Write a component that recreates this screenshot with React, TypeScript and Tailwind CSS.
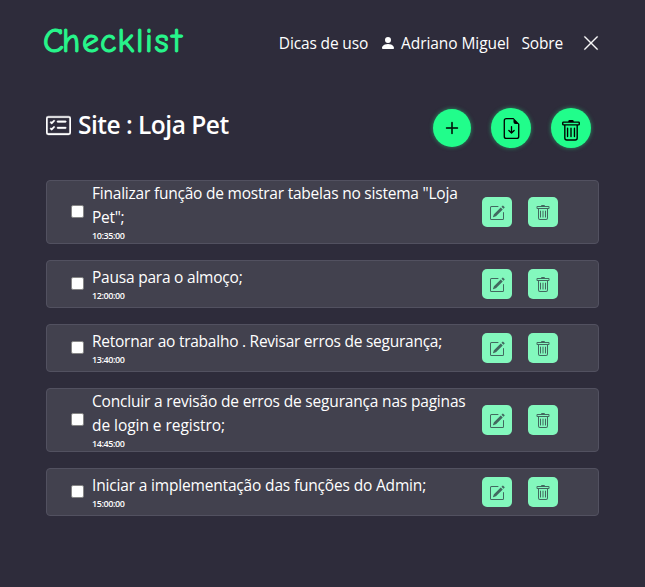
import {
  BsCardChecklist,
  BsFileEarmarkArrowDown,
  BsPencilSquare,
  BsPersonFill,
  BsPlusLg,
  BsTrash,
  BsXLg,
} from "react-icons/bs";

type Task = { lines: { text: string; tracking: string }[]; time: string };

const tasks: Task[] = [
  {
    lines: [
      { text: 'Finalizar função de mostrar tabelas no sistema "Loja', tracking: "tracking-[-0.22px]" },
      { text: 'Pet";', tracking: "tracking-[-0.3px]" },
    ],
    time: "10:35:00",
  },
  { lines: [{ text: "Pausa para o almoço;", tracking: "tracking-[-0.22px]" }], time: "12:00:00" },
  {
    lines: [{ text: "Retornar ao trabalho . Revisar erros de segurança;", tracking: "tracking-[-0.25px]" }],
    time: "13:40:00",
  },
  {
    lines: [
      { text: "Concluir a revisão de erros de segurança nas paginas", tracking: "tracking-[-0.18px]" },
      { text: "de login e registro;", tracking: "tracking-[-0.05px]" },
    ],
    time: "14:45:00",
  },
  {
    lines: [{ text: "Iniciar a implementação das funções do Admin;", tracking: "tracking-[-0.17px]" }],
    time: "15:00:00",
  },
];

function TaskRow({ task }: { task: Task }) {
  return (
    <li className="flex items-center rounded-[4px] border border-[#525160] bg-[#42414e] pr-10 pb-0.5 pl-6">
      <input
        type="checkbox"
        className="mr-2 h-[13px] w-[13px] shrink-0 appearance-none rounded-[2px] border border-[#858585] bg-white"
      />
      <div className="min-w-0 flex-1">
        {task.lines.map((line) => (
          <p key={line.text} className={`h-6 text-[15.5px] leading-6 whitespace-nowrap ${line.tracking}`}>
            {line.text}
          </p>
        ))}
        <p className="h-3 text-[9px] leading-[14px] font-semibold tracking-[-0.4px]">{task.time}</p>
      </div>
      <div className="mt-2 mb-1.5 flex gap-4 text-[#42685f]">
        <button className="flex h-[30px] w-[30px] items-center justify-center rounded-[5px] bg-[#83f8bd] pt-px">
          <BsPencilSquare size={16} />
        </button>
        <button className="flex h-[30px] w-[30px] items-center justify-center rounded-[5px] bg-[#83f8bd] pt-px">
          <BsTrash size={16} />
        </button>
      </div>
    </li>
  );
}

export default function App() {
  return (
    <div className="h-[587px] w-[645px] overflow-hidden bg-[#2e2c3b] px-[46px] font-['Segoe_UI','Open_Sans',sans-serif] text-white">
      <header className="flex h-[86px] items-center justify-between">
        <svg width="145" height="44" viewBox="0 0 145 44" className="-ml-1 overflow-visible">
          <text
            x="1 20 40 58 75.5 94 103 112.5 130"
            y="31"
            fill="#27f58b"
            stroke="#27f58b"
            strokeWidth="1.1"
            strokeLinejoin="round"
            className="font-['Comic_Sans_MS','Comic_Neue',cursive] text-[34px]"
          >
            Checklist
          </text>
        </svg>
        <nav className="flex items-center text-[15.5px] leading-6 whitespace-nowrap">
          <a className="mr-3 tracking-[-0.15px]">Dicas de uso</a>
          <a className="mr-3 flex items-center gap-[5px] tracking-[-0.08px]">
            <BsPersonFill size={16} />
            Adriano Miguel
          </a>
          <a className="mr-[19px] tracking-[-0.15px]">Sobre</a>
          <BsXLg size={18} strokeWidth={0.3} className="-mr-px" />
        </nav>
      </header>

      <section className="mt-[22px] flex h-10 items-center justify-between pr-2">
        <h1 className="-mt-1.5 flex items-center gap-[7px] text-[24.5px] font-semibold tracking-[-0.5px] whitespace-nowrap">
          <BsCardChecklist size={25} strokeWidth={0.25} />
          Site : Loja Pet
        </h1>
        <div className="flex items-center gap-5 text-black">
          <button className="flex h-[38px] w-[38px] items-center justify-center rounded-full bg-[#21fd8b] shadow-[0_0_4px_#21fd8b80]">
            <BsPlusLg size={16} strokeWidth={0.5} />
          </button>
          <button className="flex h-10 w-10 items-center justify-center rounded-full bg-[#21fd8b] shadow-[0_0_4px_#21fd8b80]">
            <BsFileEarmarkArrowDown size={21} />
          </button>
          <button className="flex h-10 w-10 items-center justify-center rounded-full bg-[#21fd8b] pt-[5px] shadow-[0_0_4px_#21fd8b80]">
            <BsTrash size={22} />
          </button>
        </div>
      </section>

      <ul className="mt-8 flex flex-col gap-4">
        {tasks.map((task) => (
          <TaskRow key={task.time} task={task} />
        ))}
      </ul>
    </div>
  );
}
